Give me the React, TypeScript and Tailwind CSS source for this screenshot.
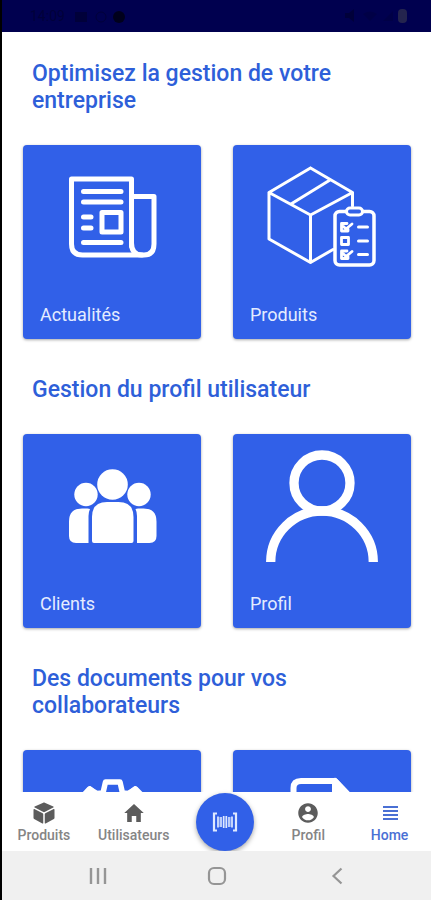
import React from "react";
import { IoMdContact, IoMdCube, IoMdHome } from "react-icons/io";

interface Card {
    label: string;
    icon: React.ReactNode;
}

interface CardSection {
    title: string;
    cards: Card[];
}

const NewsIcon = () => (
    <g fill="none" stroke="white" strokeWidth="5" strokeLinecap="round" strokeLinejoin="round">
        <path d="M108.500 101V34H48.500V99Q48.500 110 59.500 110H121Q131 110 131 99V51.500H109" />
        <path d="M108.500 98Q108.500 110 119 110" />
        <path d="M60.500 46.500H98M60.500 57H98M60.500 72H68M60.500 83H68M60.500 97.500H98" />
        <rect x="79" y="67.500" width="19" height="19.500" />
    </g>
);

const BoxIcon = () => (
    <g fill="none" stroke="white" strokeWidth="3" strokeLinecap="round" strokeLinejoin="round">
        <path d="M77.500 23L36 47.500V94L77.500 117.500L100 104.500M77.500 23L119.500 47.500V61M36 47.500L77.500 70L119.500 47.500M77.500 70V117.500M97 35L58 59" />
        <rect x="102" y="66.500" width="39" height="53.500" rx="4.500" strokeWidth="3.500" />
        <rect x="113.500" y="63" width="16" height="7" rx="3.500" fill="#3160e8" />
        <path d="M125.500 82H134.500M125.500 96H134.500M125.500 109.500H134.500" />
        <g strokeWidth="2.800">
            <path d="M114 78.500H108.500V86H115V84M110.500 81.500L113 84L119 79" />
            <rect x="108.500" y="92.500" width="7" height="7" />
            <path d="M114 106H108.500V113.500H115V111.500M110.500 109L113 111.500L119 106.500" />
        </g>
    </g>
);

const GroupIcon = () => (
    <g fill="white">
        <circle cx="89.500" cy="50.500" r="15.300" />
        <circle cx="63" cy="60.500" r="11.700" />
        <circle cx="116" cy="60.500" r="11.700" />
        <path d="M69 107V83Q69 68 84 68H95.500Q110.500 68 110.500 83V107Q110.500 109 108.500 109H71Q69 109 69 107Z" />
        <path d="M64.500 74.500H59Q46 74.500 46 87.500V102Q46 109 53 109H65.500V82Q65.500 78 67 75Z" />
        <path d="M115 74.500H120.500Q133.500 74.500 133.500 87.500V102Q133.500 109 126.500 109H114V82Q114 78 112.500 75Z" />
    </g>
);

const PersonIcon = () => (
    <g fill="none" stroke="white" strokeWidth="9.300">
        <circle cx="89" cy="49" r="28" />
        <path d="M37.700 128A51.300 51 0 0 1 140.300 128" />
    </g>
);

const GearIcon = () => (
    <g fill="none" stroke="white" strokeWidth="5.500" strokeLinejoin="round">
        <path d="M82.500 32H97L99.500 43L105 43.500L112.500 39L123 49.500L117 58L120 64L131 67V81L120 84L117 90L123 99L112.500 109L105 104L99.500 106L97 117H82.500L80 106L74 104L66.500 109L56.500 99L62 90L59 84L48 81V67L59 64L62 58L56.500 49.500L66.500 39L74 43.500L80 43Z" />
        <circle cx="89.500" cy="74" r="14" />
        <path d="M62 45L67 39L73 44ZM117 45L112 39L106 44Z" fill="white" />
    </g>
);

const DocumentIcon = () => (
    <g fill="none" stroke="white" strokeWidth="6" strokeLinejoin="round">
        <path d="M102 31H68Q60.500 31 60.500 38V110Q60.500 117 67 117H114Q120 117 120 110V50Z" />
        <path d="M102 31V50H120Z" fill="white" />
    </g>
);

const sections: CardSection[] = [
    {
        title: "Optimisez la gestion de votre entreprise",
        cards: [
            { label: "Actualités", icon: <NewsIcon /> },
            { label: "Produits", icon: <BoxIcon /> },
        ],
    },
    {
        title: "Gestion du profil utilisateur",
        cards: [
            { label: "Clients", icon: <GroupIcon /> },
            { label: "Profil", icon: <PersonIcon /> },
        ],
    },
    {
        title: "Des documents pour vos collaborateurs",
        cards: [
            { label: "", icon: <GearIcon /> },
            { label: "", icon: <DocumentIcon /> },
        ],
    },
];

const StatusBar = () => (
    <header className="flex h-8 shrink-0 items-center justify-between bg-[#00004f] pr-6 pl-7 text-[#00003a]">
        <div className="flex items-center gap-2">
            <span className="text-sm">14:09</span>
            <svg viewBox="0 0 52 14" className="h-[14px] w-[52px]" fill="currentColor">
                <path d="M2 3H14V13H2Z" />
                <circle cx="28" cy="8" r="5" fill="none" stroke="currentColor" />
                <circle cx="46" cy="8" r="6" fill="#00001c" />
            </svg>
        </div>
        <svg viewBox="0 0 64 14" className="h-[14px] w-16" fill="currentColor">
            <path d="M2 4H6L11 0V13L6 9H2Z" />
            <path d="M20 5Q27 0 34 5L27 12ZM40 12L50 2V12Z" opacity=".4" />
            <rect x="55" y="0" width="9" height="14" rx="4" fill="#24244e" />
        </svg>
    </header>
);

const MenuCard: React.FC<Card> = ({ label, icon }) => (
    <button
        aria-label={label || undefined}
        className="flex h-[194px] flex-col items-center justify-between rounded bg-[#3160e8] pb-3 shadow-[0_1px_3px_rgba(0,0,0,0.35)]"
    >
        <svg viewBox="0 0 178 134" className="h-[134px] w-full">
            {icon}
        </svg>
        <span className="w-full px-[17px] text-left text-lg leading-6 text-[#e4ecff]">{label}</span>
    </button>
);

const navItem = "flex flex-col items-center pt-[9px] text-sm leading-5 font-medium";

const BottomNav = () => (
    <nav className="grid h-[59px] shrink-0 grid-cols-[84fr_96fr_87fr_80fr_83fr] bg-white text-[#858585]">
        <a href="#produits" className={navItem}>
            <IoMdCube className="size-6 text-[#5c5c5c]" />
            Produits
        </a>
        <a href="#utilisateurs" className={navItem}>
            <IoMdHome className="size-6 text-[#5c5c5c]" />
            Utilisateurs
        </a>
        <button
            aria-label="Scanner"
            className="flex size-[58px] items-center justify-center self-center justify-self-center rounded-full bg-[#3160e8] shadow-[0_2px_5px_rgba(0,0,0,0.35)]"
        >
            <svg viewBox="0 0 26 20" className="h-5 w-[26px]" fill="none" stroke="#dfe9ff">
                <path d="M5 1.500H2V18.500H5M21 1.500H24V18.500H21" strokeWidth="2.200" />
                <path d="M6 4.500V15.500M20 4.500V15.500M11.700 4V16M14.300 4V16" strokeWidth="1.700" />
                <path d="M8.800 5V15M17.200 5V15" strokeWidth="2.600" opacity=".8" />
            </svg>
        </button>
        <a href="#profil" className={navItem}>
            <IoMdContact className="size-6 text-[#5c5c5c]" />
            Profil
        </a>
        <a href="#home" className={`${navItem} text-[#4a70d4]`}>
            <svg viewBox="0 0 24 24" className="size-6" stroke="currentColor" strokeWidth="2">
                <path d="M5 6H20M5 10H20M5 14H20M5 18H20" />
            </svg>
            Home
        </a>
    </nav>
);

const SystemBar = () => (
    <footer className="grid h-[49px] shrink-0 grid-cols-3 place-items-center bg-[#f0f0f0] pr-[34px] pl-9 text-[#959595]">
        <button aria-label="Applications">
            <svg viewBox="0 0 20 20" className="size-5" stroke="currentColor" strokeWidth="2.400">
                <path d="M3 2V18M10 2V18M17 2V18" />
            </svg>
        </button>
        <button aria-label="Accueil">
            <svg viewBox="0 0 20 20" className="size-5" fill="none" stroke="currentColor" strokeWidth="2.200">
                <rect x="2" y="2" width="16" height="16" rx="5" />
            </svg>
        </button>
        <button aria-label="Retour">
            <svg viewBox="0 0 20 20" className="size-5" fill="none" stroke="currentColor" strokeWidth="2.200">
                <path d="M14.500 2.500L6.500 10L14.500 17.500" />
            </svg>
        </button>
    </footer>
);

const App: React.FC = () => {
    return (
        <div className="flex h-screen flex-col border-l-2 border-black bg-white font-['Roboto',sans-serif]">
            <StatusBar />
            <main className="flex min-h-0 flex-1 flex-col gap-[37px] overflow-hidden pt-7 pr-5 pl-[21px]">
                {sections.map((section) => (
                    <section key={section.title} className="shrink-0">
                        <h2 className="mb-[31px] px-[9px] text-[23px] leading-[27px] font-medium text-[#2e5fd9]">
                            {section.title}
                        </h2>
                        <div className="grid grid-cols-2 gap-8">
                            {section.cards.map((card, index) => (
                                <MenuCard key={index} {...card} />
                            ))}
                        </div>
                    </section>
                ))}
            </main>
            <BottomNav />
            <SystemBar />
        </div>
    );
};

export default App;
